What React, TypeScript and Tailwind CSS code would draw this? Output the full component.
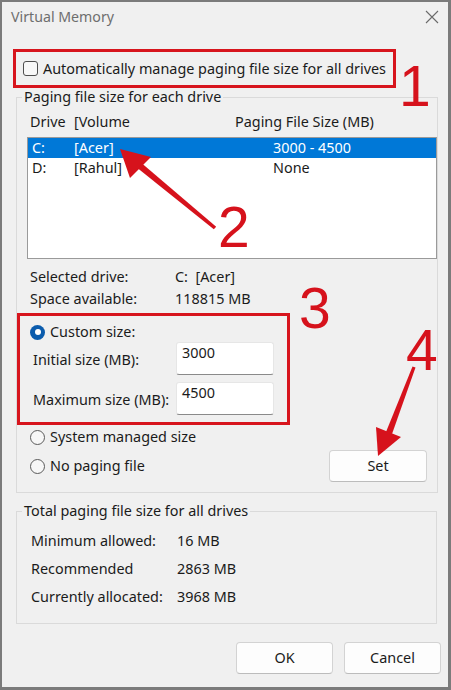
import React from "react";

function Radio({ checked }: { checked?: boolean }) {
  if (checked) {
    return (
      <div className="w-[15px] h-[15px] rounded-full bg-[#0b5cad] flex items-center justify-center shrink-0">
        <div className="w-[6px] h-[6px] rounded-full bg-white" />
      </div>
    );
  }
  return <div className="w-[15px] h-[15px] rounded-full border border-[#5a5a5a] bg-[#f7f7f7] shrink-0" />;
}

export default function App() {
  return (
    <div className="w-[451px] h-[690px] bg-[#f0f0f0] border-2 border-r-[3px] border-b-[3px] border-[#7b7b7b] relative overflow-hidden text-[#1b1b1b] text-[14.4px] leading-[20px] font-['Noto_Sans',sans-serif]">
      {/* Title bar */}
      <div className="h-[30px] flex items-center justify-between pl-[9px] pr-[9px]">
        <span className="text-[#6e6e6e] text-[14.2px]">Virtual Memory</span>
        <svg width="14" height="14" viewBox="0 0 14 14" className="block">
          <path d="M1 1 L13 13 M13 1 L1 13" stroke="#6a6a6a" strokeWidth="1.1" fill="none" />
        </svg>
      </div>

      {/* Red box 1 */}
      <div className="mt-[17px] ml-[11px] w-[383px] h-[39px] border-[3px] border-[#d7151d] flex items-center pl-[7px] gap-[5px]">
        <div className="w-[15px] h-[15px] rounded-[3px] border border-[#4f4f4f] bg-[#f8f8f8] shrink-0" />
        <span>Automatically manage paging file size for all drives</span>
      </div>

      {/* Group 1 */}
      <fieldset className="ml-[14px] w-[421px] h-[405px] border border-[#dadada]">
        <legend className="ml-[5px] px-[2px] leading-[18px]">Paging file size for each drive</legend>
        <div className="mt-[6px] h-[20px] flex pl-[13px]">
          <span className="w-[44px]">Drive</span>
          <span className="w-[161px]">[Volume</span>
          <span>Paging File Size (MB)</span>
        </div>
        <div className="mt-[5px] ml-[10px] w-[410px] h-[122px] bg-white border border-[#9a9a9a]">
          <div className="h-[20px] bg-[#0078d7] text-white flex pl-[4px]">
            <span className="w-[42px]">C:</span>
            <span className="w-[199px]">[Acer]</span>
            <span>3000 - 4500</span>
          </div>
          <div className="h-[20px] flex pl-[4px]">
            <span className="w-[42px]">D:</span>
            <span className="w-[199px]">[Rahul]</span>
            <span>None</span>
          </div>
        </div>
        <div className="mt-[7px] h-[22px] flex items-center pl-[13px]">
          <span className="w-[145px]">Selected drive:</span>
          <span>C:&nbsp;&nbsp;[Acer]</span>
        </div>
        <div className="h-[22px] flex items-center pl-[13px]">
          <span className="w-[145px]">Space available:</span>
          <span>118815 MB</span>
        </div>

        {/* Red box 3 */}
        <div className="mt-[3px] w-[273px] h-[112px] border-[3px] border-[#d7151d]">
          <div className="mt-[6px] h-[20px] flex items-center pl-[10px] gap-[5px]">
            <Radio checked />
            <span>Custom size:</span>
          </div>
          <div className="flex items-center pl-[13px]">
            <span className="w-[143px] pt-[3px]">Initial size (MB):</span>
            <div className="w-[98px] h-[33px] bg-white border border-[#e6e6e6] border-b-[#8a8a8a] rounded-[3px] pl-[5px]">3000</div>
          </div>
          <div className="mt-[7px] flex items-center pl-[13px]">
            <span className="w-[143px] pt-[3px]">Maximum size (MB):</span>
            <div className="w-[98px] h-[33px] bg-white border border-[#e6e6e6] border-b-[#8a8a8a] rounded-[3px] pl-[5px]">4500</div>
          </div>
        </div>

        <div className="mt-[2px] h-[20px] flex items-center pl-[13px] gap-[5px]">
          <Radio />
          <span>System managed size</span>
        </div>
        <div className="mt-[3px] h-[32px] flex items-center justify-between pl-[13px] pr-[10px]">
          <div className="flex items-center gap-[5px]">
            <Radio />
            <span>No paging file</span>
          </div>
          <button className="w-[98px] h-[32px] bg-[#fdfdfd] border border-[#d3d3d3] border-b-[#bcbcbc] rounded-[4px] flex items-center justify-center">
            Set
          </button>
        </div>
      </fieldset>

      {/* Group 2 */}
      <fieldset className="mt-[9px] ml-[14px] w-[421px] h-[122px] border border-[#dadada]">
        <legend className="ml-[5px] px-[2px] leading-[18px]">Total paging file size for all drives</legend>
        <div className="mt-[7px] h-[28px] flex items-center pl-[14px]">
          <span className="w-[146px]">Minimum allowed:</span>
          <span>16 MB</span>
        </div>
        <div className="h-[28px] flex items-center pl-[14px]">
          <span className="w-[146px]">Recommended</span>
          <span>2863 MB</span>
        </div>
        <div className="h-[27px] flex items-center pl-[14px]">
          <span className="w-[146px]">Currently allocated:</span>
          <span>3968 MB</span>
        </div>
      </fieldset>

      {/* Buttons */}
      <div className="mt-[18px] flex justify-end gap-[11px] pr-[7px]">
        <button className="w-[97px] h-[32px] bg-[#fdfdfd] border border-[#d3d3d3] border-b-[#bcbcbc] rounded-[4px] flex items-center justify-center">
          OK
        </button>
        <button className="w-[97px] h-[32px] bg-[#fdfdfd] border border-[#d3d3d3] border-b-[#bcbcbc] rounded-[4px] flex items-center justify-center">
          Cancel
        </button>
      </div>

      {/* Annotation digits */}
      <span className="absolute left-[397px] top-[56px] text-[57px] leading-none text-[#d6121c] font-['Liberation_Sans',sans-serif]">1</span>
      <span className="absolute left-[216px] top-[197px] text-[57px] leading-none text-[#d6121c] font-['Liberation_Sans',sans-serif]">2</span>
      <span className="absolute left-[297px] top-[278px] text-[57px] leading-none text-[#d6121c] font-['Liberation_Sans',sans-serif]">3</span>
      <span className="absolute left-[404px] top-[320px] text-[57px] leading-none text-[#d6121c] font-['Liberation_Sans',sans-serif]">4</span>

      {/* Arrows */}
      <svg className="absolute left-[-2px] top-[-2px] pointer-events-none" width="451" height="690" viewBox="0 0 451 690">
        <polygon points="120,149 151,157 130,178" fill="#d6121c" />
        <polygon points="142,163.5 216.2,226.8 213.8,229.2 138,168.5" fill="#d6121c" />
        <polygon points="378,456 376,427 401,437" fill="#d6121c" />
        <polygon points="386,432 392,434 415.5,367.5 412.5,366.5" fill="#d6121c" />
      </svg>
    </div>
  );
}
